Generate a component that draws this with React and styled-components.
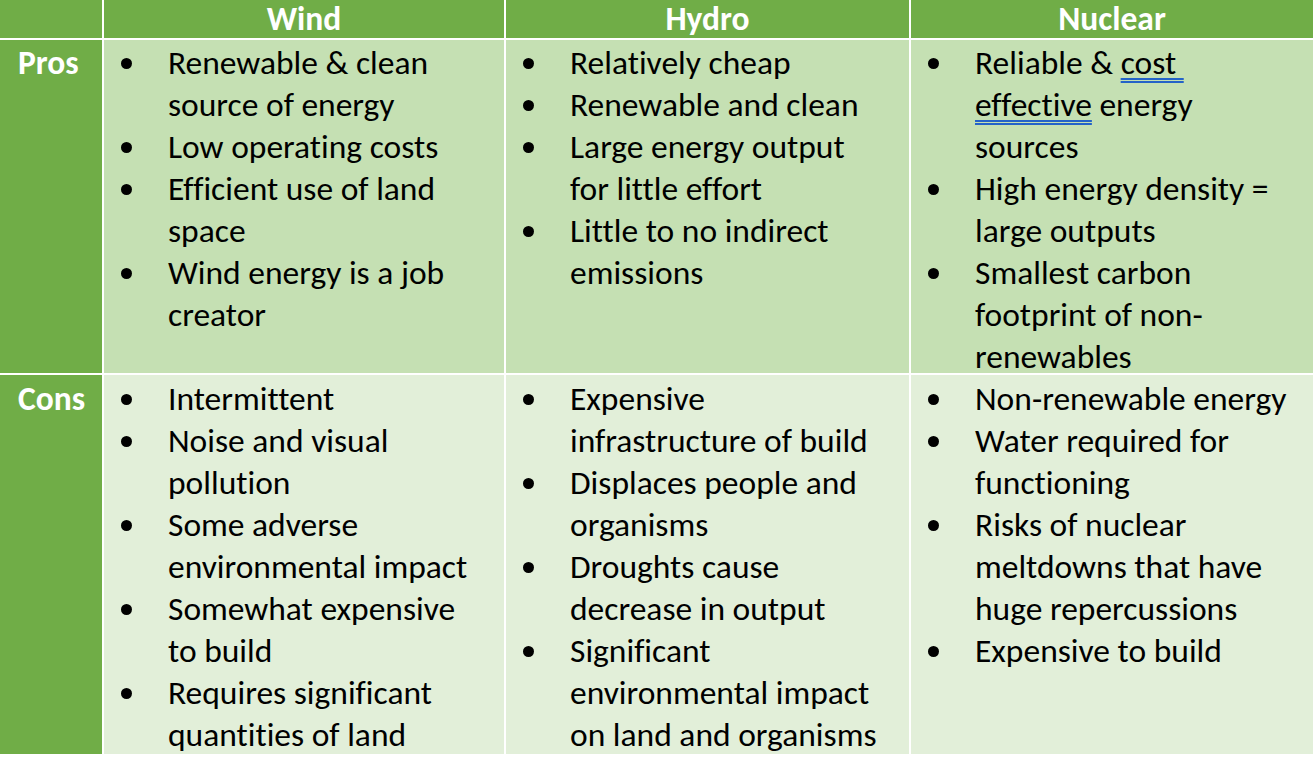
import React from 'react';
import styled, {createGlobalStyle} from 'styled-components';

const GlobalStyle = createGlobalStyle`
html, body {
  margin: 0;
  padding: 0;
  background: #fff;
}
body {
  font-family: Carlito, Calibri, Lato, "Liberation Sans", sans-serif;
  font-variant-ligatures: no-common-ligatures;
  color: #000;
}
`;

const Table = styled.div`
display: grid;
grid-template-columns: 102px 400px 403px 402px;
grid-template-rows: 38px 333px 379px;
gap: 2px;
width: 1313px;
background: #fff;
`;

const HeadCell = styled.div`
background: #70ad47;
color: #fff;
font-weight: bold;
font-size: 33.5px;
line-height: 38px;
text-align: center;
white-space: nowrap;
`;

const RowLabel = styled.div`
background: #70ad47;
color: #fff;
font-weight: bold;
font-size: 33.5px;
line-height: 42px;
padding: ${p => p.$top}px 0 0 18px;
`;

const Cell = styled.div`
background: ${p => p.$tone === 'pros' ? '#c5e0b3' : '#e2efd9'};
padding-top: ${p => p.$top}px;
`;

const List = styled.ul`
margin: 0;
padding: 0;
list-style: none;
`;

const Item = styled.li`
display: flex;
padding-left: 17px;
font-size: 33.5px;
line-height: 42px;
white-space: nowrap;
`;

const Bullet = styled.span`
flex: none;
width: 47px;
height: 42px;
display: flex;
align-items: center;

&::before {
  content: "";
  width: 11px;
  height: 11px;
  border-radius: 50%;
  background: #000;
}
`;

const Flagged = styled.span`
text-decoration-line: underline;
text-decoration-style: double;
text-decoration-color: #2463c8;
text-decoration-thickness: 1.5px;
text-underline-offset: 4px;
`;

const Point = ({children}) => (
  <Item>
    <Bullet/>
    <span>{children}</span>
  </Item>
);

export default function App() {
  return (
    <>
      <GlobalStyle/>
      <Table>
        <HeadCell/>
        <HeadCell>Wind</HeadCell>
        <HeadCell>Hydro</HeadCell>
        <HeadCell>Nuclear</HeadCell>

        <RowLabel $top={2}>Pros</RowLabel>
        <Cell $tone="pros" $top={2}>
          <List>
            <Point>Renewable &amp; clean<br/>source of energy</Point>
            <Point>Low operating costs</Point>
            <Point>Efficient use of land<br/>space</Point>
            <Point>Wind energy is a job<br/>creator</Point>
          </List>
        </Cell>
        <Cell $tone="pros" $top={2}>
          <List>
            <Point>Relatively cheap</Point>
            <Point>Renewable and clean</Point>
            <Point>Large energy output<br/>for little effort</Point>
            <Point>Little to no indirect<br/>emissions</Point>
          </List>
        </Cell>
        <Cell $tone="pros" $top={2}>
          <List>
            <Point>
              Reliable &amp; <Flagged>cost&nbsp;</Flagged><br/>
              <Flagged>effective</Flagged> energy<br/>sources
            </Point>
            <Point>High energy density =<br/>large outputs</Point>
            <Point>Smallest carbon<br/>footprint of non-<br/>renewables</Point>
          </List>
        </Cell>

        <RowLabel $top={3}>Cons</RowLabel>
        <Cell $tone="cons" $top={3}>
          <List>
            <Point>Intermittent</Point>
            <Point>Noise and visual<br/>pollution</Point>
            <Point>Some adverse<br/>environmental impact</Point>
            <Point>Somewhat expensive<br/>to build</Point>
            <Point>Requires significant<br/>quantities of land</Point>
          </List>
        </Cell>
        <Cell $tone="cons" $top={3}>
          <List>
            <Point>Expensive<br/>infrastructure of build</Point>
            <Point>Displaces people and<br/>organisms</Point>
            <Point>Droughts cause<br/>decrease in output</Point>
            <Point>Significant<br/>environmental impact<br/>on land and organisms</Point>
          </List>
        </Cell>
        <Cell $tone="cons" $top={3}>
          <List>
            <Point>Non-renewable energy</Point>
            <Point>Water required for<br/>functioning</Point>
            <Point>Risks of nuclear<br/>meltdowns that have<br/>huge repercussions</Point>
            <Point>Expensive to build</Point>
          </List>
        </Cell>
      </Table>
    </>
  );
}
